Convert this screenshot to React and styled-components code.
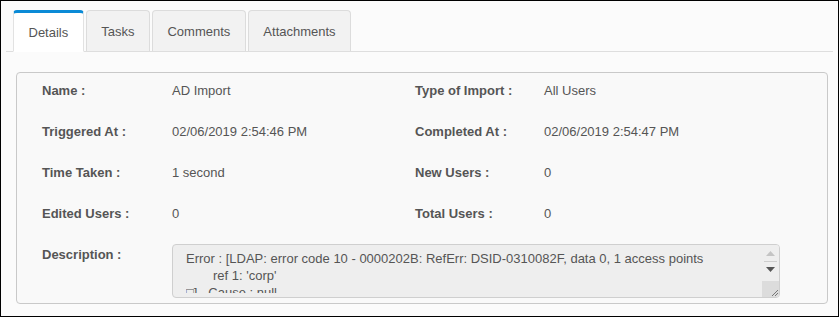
import React from "react";
import styled, { createGlobalStyle } from "styled-components";

const GlobalStyle = createGlobalStyle`
  html, body {
    margin: 0;
    padding: 0;
    background: #fff;
  }
  body {
    font-family: "Liberation Sans", Arial, sans-serif;
    font-size: 13px;
    color: #555;
  }
`;

const Frame = styled.div`
  box-sizing: border-box;
  width: 839px;
  height: 317px;
  border: 1px solid #000;
  background: #fbfbfb;
  padding: 9px 5px 0 5px;
  overflow: hidden;
`;

const TabBar = styled.div`
  display: flex;
  align-items: flex-end;
  padding-left: 7px;
  border-bottom: 1px solid #dedede;
  height: 41px;
`;

const Tab = styled.div`
  box-sizing: border-box;
  height: ${(p) => (p.$active ? "42px" : "41px")};
  margin-bottom: ${(p) => (p.$active ? "-1px" : "0")};
  margin-right: 2px;
  padding: 0 14.5px;
  display: flex;
  align-items: center;
  justify-content: center;
  font-size: 13px;
  color: #555;
  background: ${(p) => (p.$active ? "#fff" : "#f2f2f2")};
  border: 1px solid ${(p) => (p.$active ? "#e2e2e2" : "#dcdcdc")};
  border-top: ${(p) => (p.$active ? "3px solid #0a8ad6" : "1px solid #dcdcdc")};
  border-bottom: ${(p) => (p.$active ? "1px solid #fff" : "none")};
  border-radius: 4px 4px 0 0;
  padding-top: ${(p) => (p.$active ? "0" : "1px")};
`;

const Panel = styled.div`
  margin: 20px 5px 0 10px;
  height: 232px;
  box-sizing: border-box;
  border: 1px solid #c9c9c9;
  border-radius: 4px;
  background: #f9f9f9;
  padding: 8px 0 0 25px;
  display: grid;
  grid-template-columns: 130px 243px 129px 1fr;
  grid-auto-rows: 20px;
  row-gap: 21px;
`;

const Label = styled.div`
  font-weight: bold;
  color: #555;
  line-height: 20px;
`;

const Value = styled.div`
  color: #555;
  line-height: 20px;
`;

const TextBox = styled.div`
  grid-column: 2 / 5;
  margin-top: -1px;
  width: 608px;
  height: 54px;
  box-sizing: border-box;
  border: 1px solid #cfcfcf;
  border-radius: 4px;
  background: #eee;
  display: flex;
  overflow: hidden;
`;

const TextContent = styled.div`
  flex: 1;
  padding: 5px 0 0 13px;
`;

const TextClip = styled.div`
  height: 43px;
  line-height: 17px;
  color: #555;
  white-space: pre;
  overflow: hidden;
`;

const Indent = styled.span`
  padding-left: 27px;
`;

const ScrollBar = styled.div`
  width: 17px;
  display: flex;
  flex-direction: column;
  align-items: center;
  background: #eee;
`;

const Arrow = styled.div`
  height: ${(p) => p.$h}px;
  width: 13px;
  display: flex;
  align-items: center;
  justify-content: center;
  border-bottom: ${(p) => (p.$divider ? "1px solid #cdcdcd" : "none")};
  box-sizing: border-box;
`;

const Grip = styled.div`
  margin-top: auto;
  width: 100%;
  height: 16px;
  background: #dcdcdc;
  display: flex;
  align-items: flex-end;
  justify-content: flex-end;
`;

const rows = [
  ["Name :", "AD Import", "Type of Import :", "All Users"],
  ["Triggered At :", "02/06/2019 2:54:46 PM", "Completed At :", "02/06/2019 2:54:47 PM"],
  ["Time Taken :", "1 second", "New Users :", "0"],
  ["Edited Users :", "0", "Total Users :", "0"],
];

export default function App() {
  return (
    <>
      <GlobalStyle />
      <Frame>
        <TabBar>
          <Tab $active>Details</Tab>
          <Tab>Tasks</Tab>
          <Tab>Comments</Tab>
          <Tab>Attachments</Tab>
        </TabBar>
        <Panel>
          {rows.map((r) => (
            <React.Fragment key={r[0]}>
              <Label>{r[0]}</Label>
              <Value>{r[1]}</Value>
              <Label>{r[2]}</Label>
              <Value>{r[3]}</Value>
            </React.Fragment>
          ))}
          <Label>Description :</Label>
          <TextBox>
            <TextContent>
              <TextClip>
                {"Error : [LDAP: error code 10 - 0000202B: RefErr: DSID-0310082F, data 0, 1 access points\n"}
                <Indent>{"ref 1: 'corp'"}</Indent>
                {"\n\u25A1]   Cause : null"}
              </TextClip>
            </TextContent>
            <ScrollBar>
              <Arrow $h={17} $divider>
                <svg width="9" height="5" viewBox="0 0 9 5">
                  <path d="M0 5 L4.5 0 L9 5 Z" fill="#c4c4c4" />
                </svg>
              </Arrow>
              <Arrow $h={15}>
                <svg width="9" height="5" viewBox="0 0 9 5">
                  <path d="M0 0 L9 0 L4.5 5 Z" fill="#555" />
                </svg>
              </Arrow>
              <Grip>
                <svg width="9" height="9" viewBox="0 0 9 9">
                  <path d="M8 2 L2 8 M8 5 L5 8" stroke="#777" strokeWidth="1" />
                </svg>
              </Grip>
            </ScrollBar>
          </TextBox>
        </Panel>
      </Frame>
    </>
  );
}
